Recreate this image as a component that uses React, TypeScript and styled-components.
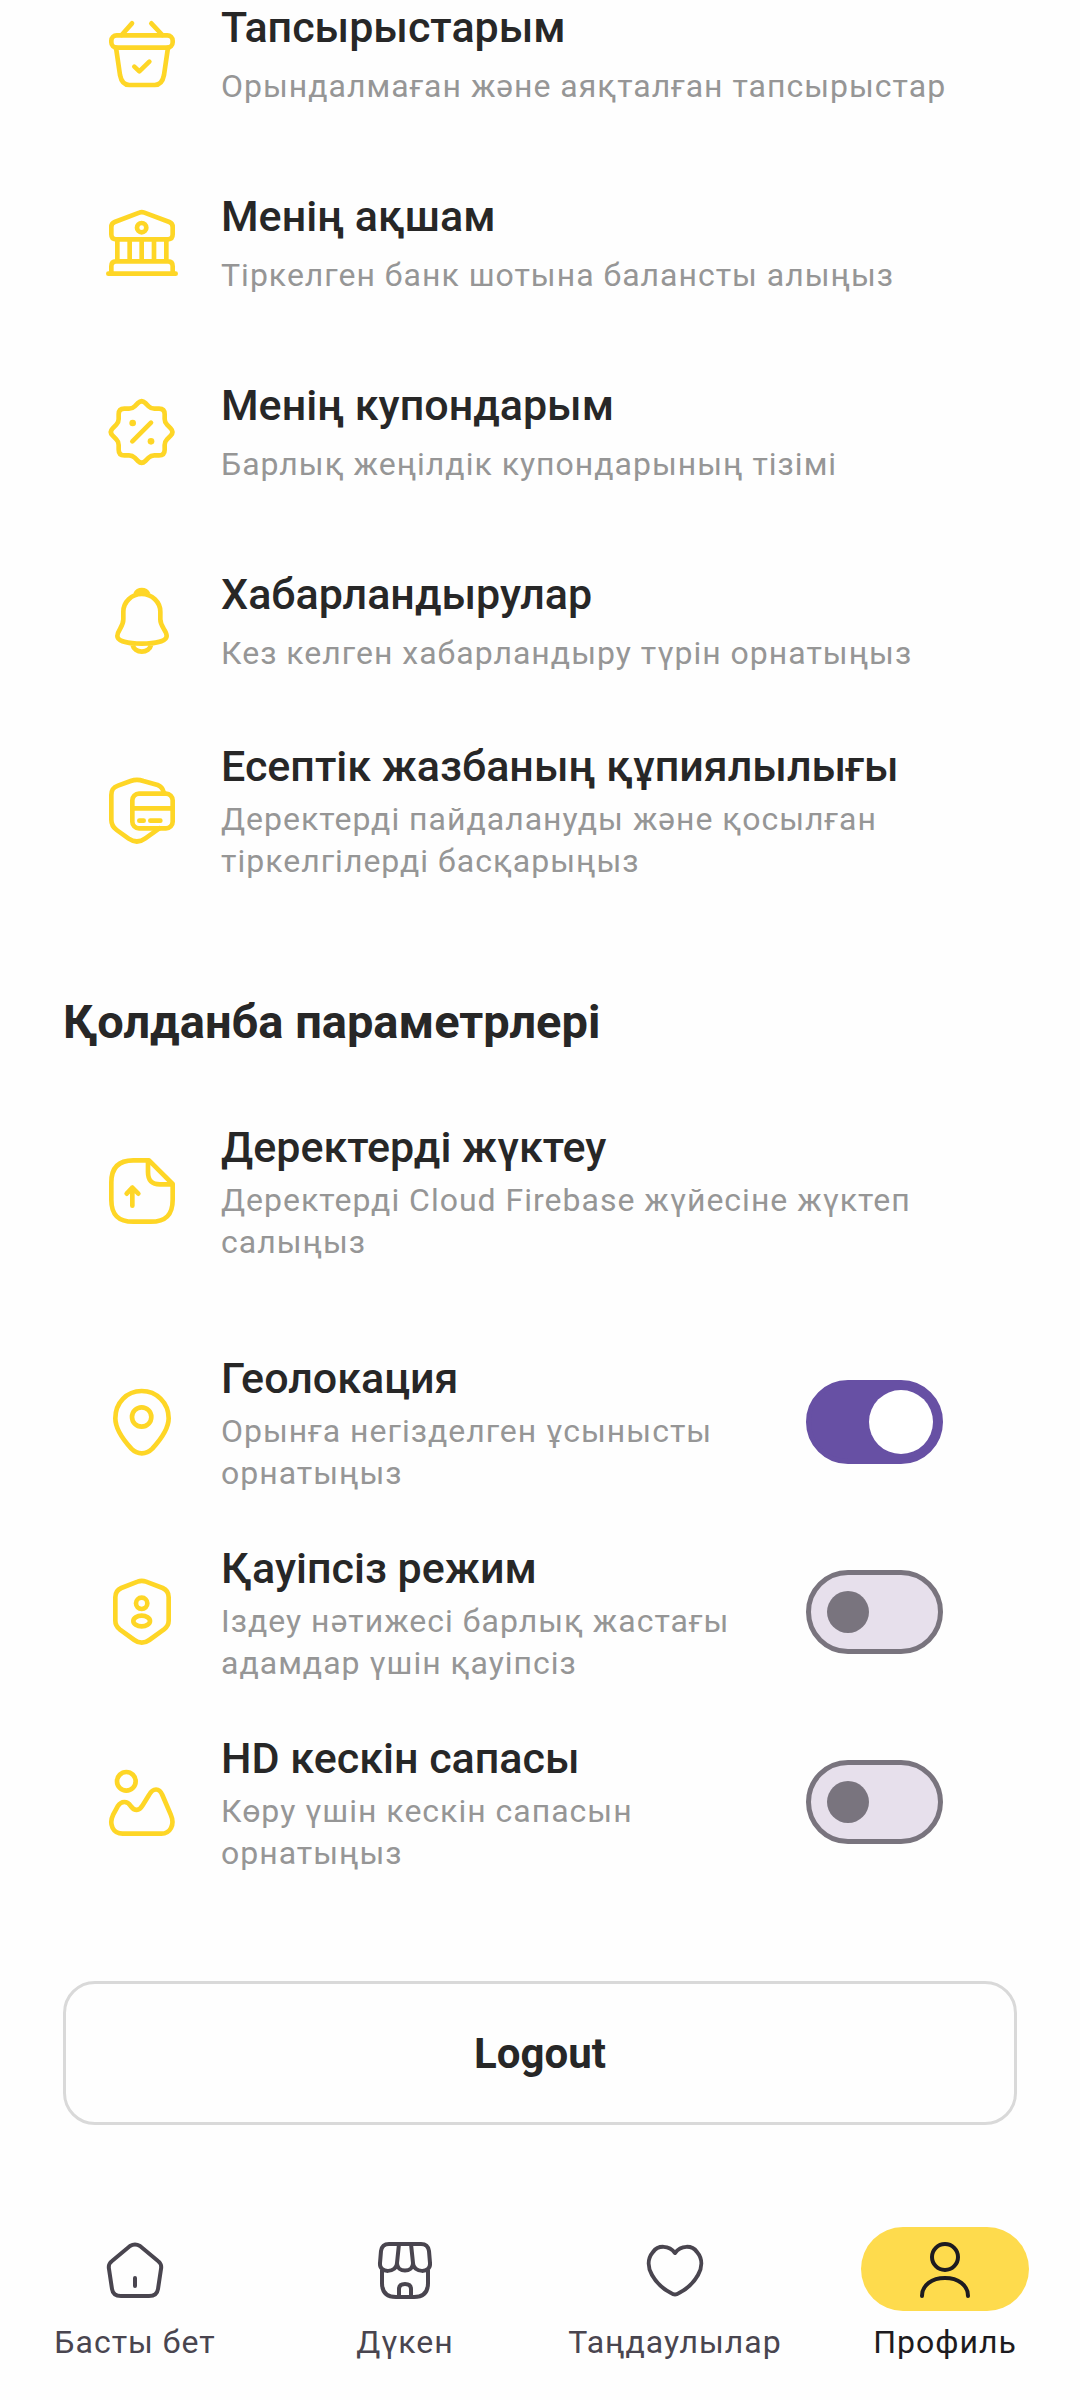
import React, { useState } from "react";
import styled, { createGlobalStyle } from "styled-components";

const color = {
  page: "#fefefe",
  title: "#272727",
  muted: "#969696",
  brand: "#fed626",
  pill: "#fedb4d",
  nav: "#49454f",
  navActive: "#1d1b20",
  accent: "#6750a4",
  track: "#e7e0ec",
  outline: "#79747e",
  border: "#d9d9d9",
};

const GlobalStyle = createGlobalStyle`
  *, *::before, *::after { box-sizing: border-box; }
  body {
    margin: 0;
    background: ${color.page};
    font-family: Roboto, "Noto Sans", sans-serif;
    color: ${color.title};
  }
`;

const Screen = styled.div`
  display: flex;
  flex-direction: column;
  overflow: hidden;
`;

const Main = styled.main`
  display: flex;
  flex-direction: column;
`;

const List = styled.ul`
  display: flex;
  flex-direction: column;
  gap: 42px;
  list-style: none;
  margin: 0;
  padding: 0;
`;

const AccountList = styled(List)`
  margin-top: -20px;
`;

const ToggleList = styled(List)`
  margin-top: 83px;
`;

const LinkRow = styled.a`
  display: flex;
  align-items: center;
  gap: 43px;
  min-height: 147px;
  padding: 0 106px;
  color: inherit;
  text-decoration: none;
`;

const ToggleRow = styled.label`
  display: flex;
  align-items: center;
  gap: 43px;
  min-height: 147px;
  padding: 0 137px 0 106px;
  cursor: pointer;
`;

const RowIcon = styled.svg`
  flex: none;
  width: 72px;
  height: 72px;
  fill: none;
  stroke: ${color.brand};
  stroke-width: 14;
  stroke-linecap: round;
  stroke-linejoin: round;
`;

const RowText = styled.span<{ $short?: boolean }>`
  display: flex;
  flex: 1;
  flex-direction: column;
  gap: ${(p) => (p.$short ? 8 : 2)}px;
  padding-bottom: ${(p) => (p.$short ? 4 : 2)}px;
  min-width: 0;
`;

const RowTitle = styled.span`
  font-size: 43px;
  font-weight: 500;
  line-height: 60px;
`;

const RowSub = styled.span`
  color: ${color.muted};
  font-size: 32px;
  letter-spacing: 1px;
  line-height: 42px;
`;

const SectionTitle = styled.h2`
  margin: 107px 63px 64px;
  font-size: 47px;
  font-weight: 700;
  line-height: 62px;
`;

const Switch = styled.input`
  appearance: none;
  display: flex;
  align-items: center;
  flex: none;
  width: 137px;
  height: 84px;
  margin: 0;
  padding: 0 16px;
  border: 5px solid ${color.outline};
  border-radius: 42px;
  background: ${color.track};
  cursor: pointer;

  &::before {
    content: "";
    width: 42px;
    height: 42px;
    border-radius: 50%;
    background: ${color.outline};
  }

  &:checked {
    justify-content: flex-end;
    padding: 0 5px;
    border-color: ${color.accent};
    background: ${color.accent};
  }

  &:checked::before {
    width: 64px;
    height: 64px;
    background: #fff;
  }
`;

const LogoutButton = styled.button`
  height: 144px;
  margin: 105px 63px 65px;
  border: 3px solid ${color.border};
  border-radius: 32px;
  background: transparent;
  color: ${color.title};
  font-family: inherit;
  font-size: 42px;
  font-weight: 700;
  cursor: pointer;
`;

const BottomNav = styled.nav`
  display: grid;
  grid-template-columns: repeat(4, 1fr);
  padding: 37px 0;
`;

const NavItem = styled.a<{ $active?: boolean }>`
  display: flex;
  flex-direction: column;
  align-items: center;
  gap: 10px;
  color: ${(p) => (p.$active ? color.navActive : color.nav)};
  text-decoration: none;
`;

const NavPill = styled.span<{ $active?: boolean }>`
  display: flex;
  align-items: center;
  justify-content: center;
  width: 168px;
  height: 84px;
  border-radius: 42px;
  background: ${(p) => (p.$active ? color.pill : "transparent")};
`;

const NavIcon = styled.svg`
  width: 64px;
  height: 64px;
  fill: none;
  stroke: currentColor;
  stroke-width: 4;
  stroke-linecap: round;
  stroke-linejoin: round;
`;

const NavLabel = styled.span`
  font-size: 32px;
  letter-spacing: 1px;
  line-height: 42px;
  white-space: nowrap;
`;

const BasketIcon = () => (
  <RowIcon viewBox="48 51 216 216" aria-hidden="true">
    <rect x="64" y="103" width="184" height="37" rx="16" />
    <path d="M78 140 90 222C94 243 102 252 118 252H194C210 252 218 243 222 222L234 140M95 102 126 67M217 102 184 67M133 197 148 211 178 182" />
  </RowIcon>
);

const BankIcon = () => (
  <RowIcon viewBox="48 36 216 216" aria-hidden="true">
    <path d="M64 96Q64 85 74 81L148 53Q155 50 163 53L238 81Q248 85 248 96V118Q248 133 234 133H78Q64 133 64 118Z" />
    <circle cx="155" cy="98" r="14" />
    <path d="M82 133V199M119 133V199M155 133V199M192 133V199M229 133V199M64 236V214Q64 199 78 199H234Q248 199 248 214V236M55 236H257" />
  </RowIcon>
);

const CouponIcon = () => (
  <RowIcon viewBox="48 34 216 216" aria-hidden="true">
    <path d="M144 55Q155 44 166 55L176 65Q183 72 193 72H207Q224 72 224 89V103Q224 113 231 120L242 131Q253 142 242 153L231 164Q224 171 224 181V195Q224 212 207 212H193Q183 212 176 219L166 229Q155 240 144 229L134 219Q127 212 117 212H103Q86 212 86 195V181Q86 171 79 164L68 153Q57 142 68 131L79 120Q86 113 86 103V89Q86 72 103 72H117Q127 72 134 65Z" />
    <path d="M127 170 183 114" />
    <circle cx="128" cy="115" r="10" fill={color.brand} stroke="none" />
    <circle cx="183" cy="170" r="10" fill={color.brand} stroke="none" />
  </RowIcon>
);

const BellIcon = () => (
  <RowIcon viewBox="48 33 216 216" aria-hidden="true">
    <path d="M155 60C125 60 100 84 100 113V136C100 160 82 168 82 186C82 202 115 209 155 209S230 202 230 186C230 168 211 160 211 136V113C211 84 186 60 155 60ZM127 211C133 240 178 240 184 211" />
    <path d="M130 58C139 36 172 36 181 58Q155 68 130 58Z" fill={color.brand} stroke="none" />
  </RowIcon>
);

const PrivacyIcon = () => (
  <RowIcon viewBox="48 45 216 216" aria-hidden="true">
    <path d="M221 99C218 88 213 82 203 78L160 66C146 61 136 61 122 66L84 80C70 85 64 92 64 108V182C64 196 68 204 80 213L116 239C132 250 150 250 166 238L208 208" />
    <rect x="127" y="104" width="121" height="104" rx="20" />
    <path d="M127 148H248M148 185H161M181 185H211" />
  </RowIcon>
);

const UploadIcon = () => (
  <RowIcon viewBox="48 45 216 216" aria-hidden="true">
    <path d="M177 61H130C84 61 64 84 64 127V179C64 224 84 245 130 245H182C228 245 248 224 248 179V132ZM174 61V96C174 122 186 133 210 133H248M127 197V143M110 161 127 143 145 161" />
  </RowIcon>
);

const PinIcon = () => (
  <RowIcon viewBox="48 34 216 216" aria-hidden="true">
    <path d="M155 49C110 49 76 84 76 131C76 165 100 196 124 222C143 241 168 241 187 222C211 196 236 165 236 131C236 84 200 49 155 49Z" />
    <circle cx="155" cy="127" r="29" />
  </RowIcon>
);

const ShieldUserIcon = () => (
  <RowIcon viewBox="48 604 216 216" aria-hidden="true">
    <path d="M143 621Q155 616 168 621L218 640Q236 648 236 668V738Q236 753 222 764L178 796Q155 812 133 796L89 764Q76 753 76 738V668Q76 648 94 640Z" />
    <circle cx="155" cy="686" r="17" />
    <ellipse cx="155" cy="739" rx="25" ry="16" />
  </RowIcon>
);

const PictureIcon = () => (
  <RowIcon viewBox="48 45 216 216" aria-hidden="true">
    <circle cx="109" cy="91" r="28" />
    <path d="M70 190 83 166C94 149 112 149 122 165C134 181 147 181 158 163L177 132C189 110 208 110 217 132L242 190C256 222 240 248 214 248H98C70 248 55 222 70 190Z" />
  </RowIcon>
);

const HomeIcon = () => (
  <NavIcon viewBox="0 0 64 64" aria-hidden="true">
    <path d="M27 9Q32 6 37 9L55 24Q59 27 58 32L55 52Q54 59 46 59H18Q10 59 9 52L6 32Q5 27 9 24ZM32 41V49" />
  </NavIcon>
);

const ShopIcon = () => (
  <NavIcon viewBox="0 0 64 64" aria-hidden="true">
    <path d="M7 26 8 14Q9 7 16 7H48Q55 7 56 14L57 26C58 37 40 36 40 26C40 36 24 36 24 26C24 36 6 37 7 26ZM26 7 24 26M38 7 40 26M9 33V46Q9 60 23 60H41Q55 60 55 46V33M26 60V52Q26 47 32 47T38 52V60" />
  </NavIcon>
);

const HeartIcon = () => (
  <NavIcon viewBox="0 0 64 64" aria-hidden="true">
    <path d="M32 16C26 8 15 8 10 15C4 22 5 31 9 38C14 47 22 53 28 56Q32 59 36 56C42 53 50 47 55 38C59 31 60 22 54 15C49 8 38 8 32 16Z" />
  </NavIcon>
);

const UserIcon = () => (
  <NavIcon viewBox="0 0 64 64" aria-hidden="true">
    <circle cx="32" cy="20" r="13" />
    <path d="M9 59C9 48 19 41 32 41S55 48 55 59" />
  </NavIcon>
);

type Entry = { id: string; title: string; sub: string; Icon: React.FC; short?: boolean };

const account: Entry[] = [
  { id: "orders", title: "Тапсырыстарым", sub: "Орындалмаған және аяқталған тапсырыстар", Icon: BasketIcon, short: true },
  { id: "money", title: "Менің ақшам", sub: "Тіркелген банк шотына балансты алыңыз", Icon: BankIcon, short: true },
  { id: "coupons", title: "Менің купондарым", sub: "Барлық жеңілдік купондарының тізімі", Icon: CouponIcon, short: true },
  { id: "notifications", title: "Хабарландырулар", sub: "Кез келген хабарландыру түрін орнатыңыз", Icon: BellIcon, short: true },
  { id: "privacy", title: "Есептік жазбаның құпиялылығы", sub: "Деректерді пайдалануды және қосылған тіркелгілерді басқарыңыз", Icon: PrivacyIcon },
];

const upload: Entry = {
  id: "upload",
  title: "Деректерді жүктеу",
  sub: "Деректерді Cloud Firebase жүйесіне жүктеп салыңыз",
  Icon: UploadIcon,
};

const toggles: Entry[] = [
  { id: "location", title: "Геолокация", sub: "Орынға негізделген ұсынысты орнатыңыз", Icon: PinIcon },
  { id: "safe", title: "Қауіпсіз режим", sub: "Іздеу нәтижесі барлық жастағы адамдар үшін қауіпсіз", Icon: ShieldUserIcon },
  { id: "hd", title: "HD кескін сапасы", sub: "Көру үшін кескін сапасын орнатыңыз", Icon: PictureIcon },
];

const tabs = [
  { id: "home", label: "Басты бет", Icon: HomeIcon },
  { id: "shop", label: "Дүкен", Icon: ShopIcon },
  { id: "favorites", label: "Таңдаулылар", Icon: HeartIcon },
  { id: "profile", label: "Профиль", Icon: UserIcon },
];

function EntryBody({ entry }: { entry: Entry }) {
  const { Icon } = entry;
  return (
    <>
      <Icon />
      <RowText $short={entry.short}>
        <RowTitle>{entry.title}</RowTitle>
        <RowSub>{entry.sub}</RowSub>
      </RowText>
    </>
  );
}

export default function App() {
  const [enabled, setEnabled] = useState<Record<string, boolean>>({ location: true });
  const active = "profile";

  return (
    <Screen>
      <GlobalStyle />
      <Main>
        <AccountList>
          {account.map((entry) => (
            <li key={entry.id}>
              <LinkRow href={`#${entry.id}`}>
                <EntryBody entry={entry} />
              </LinkRow>
            </li>
          ))}
        </AccountList>
        <SectionTitle>Қолданба параметрлері</SectionTitle>
        <LinkRow href={`#${upload.id}`}>
          <EntryBody entry={upload} />
        </LinkRow>
        <ToggleList>
          {toggles.map((entry) => (
            <li key={entry.id}>
              <ToggleRow htmlFor={entry.id}>
                <EntryBody entry={entry} />
                <Switch
                  id={entry.id}
                  type="checkbox"
                  role="switch"
                  checked={!!enabled[entry.id]}
                  onChange={(e) => setEnabled({ ...enabled, [entry.id]: e.target.checked })}
                />
              </ToggleRow>
            </li>
          ))}
        </ToggleList>
        <LogoutButton type="button">Logout</LogoutButton>
      </Main>
      <BottomNav>
        {tabs.map(({ id, label, Icon }) => (
          <NavItem key={id} href={`#${id}`} $active={id === active} aria-current={id === active ? "page" : undefined}>
            <NavPill $active={id === active}>
              <Icon />
            </NavPill>
            <NavLabel>{label}</NavLabel>
          </NavItem>
        ))}
      </BottomNav>
    </Screen>
  );
}
